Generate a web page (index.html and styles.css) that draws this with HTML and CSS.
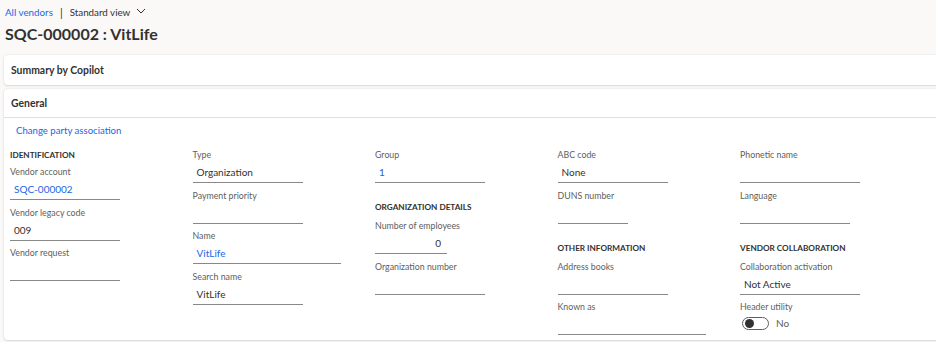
FILE: index.html
```html
<!DOCTYPE html>
<html lang="en">
<head>
  <meta charset="UTF-8" />
  <title>SQC-000002 : VitLife</title>
  <link rel="stylesheet" href="styles.css">
</head>
<body>
  <div class="crumbs">
    <a class="link">All vendors</a>
    <span class="sep">|</span>
    <span class="view">Standard view
      <svg width="10" height="6" viewBox="0 0 10 6"><path d="M1 1l4 4 4-4" fill="none" stroke="#323130" stroke-width="1"/></svg>
    </span>
  </div>
  <h1>SQC-000002 : VitLife</h1>

  <div class="card">
    <div class="card-head">Summary by Copilot</div>
  </div>

  <div class="card general">
    <div class="card-head divided">General</div>
    <a class="link party">Change party association</a>

    <div class="columns">
      <div class="col">
        <div class="group-title">IDENTIFICATION</div>
        <div class="field">
          <label>Vendor account</label>
          <div class="value link-value">SQC-000002</div>
        </div>
        <div class="field">
          <label>Vendor legacy code</label>
          <div class="value">009</div>
        </div>
        <div class="field">
          <label>Vendor request</label>
          <div class="value"></div>
        </div>
      </div>

      <div class="col">
        <div class="field">
          <label>Type</label>
          <div class="value">Organization</div>
        </div>
        <div class="field">
          <label>Payment priority</label>
          <div class="value"></div>
        </div>
        <div class="field">
          <label>Name</label>
          <div class="value wide link-value">VitLife</div>
        </div>
        <div class="field">
          <label>Search name</label>
          <div class="value">VitLife</div>
        </div>
      </div>

      <div class="col">
        <div class="field">
          <label>Group</label>
          <div class="value link-value">1</div>
        </div>
        <div class="group-title spaced">ORGANIZATION DETAILS</div>
        <div class="field">
          <label>Number of employees</label>
          <div class="value short num">0</div>
        </div>
        <div class="field">
          <label>Organization number</label>
          <div class="value"></div>
        </div>
      </div>

      <div class="col">
        <div class="field">
          <label>ABC code</label>
          <div class="value">None</div>
        </div>
        <div class="field">
          <label>DUNS number</label>
          <div class="value tiny"></div>
        </div>
        <div class="group-title spaced">OTHER INFORMATION</div>
        <div class="field">
          <label>Address books</label>
          <div class="value"></div>
        </div>
        <div class="field">
          <label>Known as</label>
          <div class="value known"></div>
        </div>
      </div>

      <div class="col">
        <div class="field">
          <label>Phonetic name</label>
          <div class="value phonetic"></div>
        </div>
        <div class="field">
          <label>Language</label>
          <div class="value"></div>
        </div>
        <div class="group-title spaced">VENDOR COLLABORATION</div>
        <div class="field">
          <label>Collaboration activation</label>
          <div class="value phonetic">Not Active</div>
        </div>
        <div class="field">
          <label>Header utility</label>
          <div class="toggle-row">
            <span class="toggle"><span class="knob"></span></span>
            <span class="toggle-text">No</span>
          </div>
        </div>
      </div>
    </div>
  </div>
</body>
</html>
```

FILE: styles.css
```css
body {
  margin: 0;
  padding: 0 0 0 4px;
  background: #faf9f8;
  color: #323130;
  font-family: Lato, "Open Sans", sans-serif;
  overflow: hidden;
  height: 342px;
}
.link {
  color: #2266e3;
  cursor: pointer;
}
.crumbs {
  font-size: 9.8px;
  display: flex;
  align-items: center;
  height: 16px;
  padding: 4px 0 0 1px;
}
.sep {
  margin: 0 7px 0 7px;
  font-size: 11px;
  color: #323130;
}
.view svg {
  margin-left: 3px;
  vertical-align: 2px;
}
h1 {
  font-size: 16px;
  font-weight: 700;
  margin: 1px 0 0 1px;
  height: 34px;
  line-height: 25px;
}
.card {
  background: #fff;
  border-radius: 4px 0 0 4px;
  box-shadow: 0 0 2px rgba(0,0,0,0.12), 0 1px 2px rgba(0,0,0,0.10);
  margin-bottom: 4px;
  margin-right: -10px;
}
.card-head {
  font-size: 10.4px;
  font-weight: 700;
  height: 30px;
  line-height: 30px;
  padding-left: 7px;
}
.card-head.divided {
  border-bottom: 1px solid #e1dfdd;
  height: 28px;
  line-height: 28px;
}
.general {
  height: 251px;
}
.party {
  display: block;
  font-size: 9.6px;
  margin: 5px 0 0 12px;
  height: 24px;
  line-height: 16px;
}
.columns {
  display: flex;
  padding-left: 6px;
}
.col {
  width: 182.5px;
  flex: none;
}
.group-title {
  font-size: 8.2px;
  font-weight: 700;
  height: 16px;
  line-height: 16px;
  margin-bottom: 1px;
  color: #323130;
}
.group-title.spaced {
  margin-top: 16px;
  margin-bottom: 3px;
}
.field {
  margin-bottom: 4.5px;
}
.field label {
  display: block;
  font-size: 8.8px;
  color: #605e5c;
  height: 16px;
  line-height: 16px;
}
.value {
  width: 106px;
  height: 19px;
  line-height: 19px;
  font-size: 10px;
  padding-left: 4px;
  border-bottom: 1px solid #8a8886;
}
.link-value {
  color: #2266e3;
}
.value.wide {
  width: 144px;
}
.value.short {
  width: 62px;
  padding-right: 6px;
}
.value.num {
  text-align: right;
}
.value.tiny {
  width: 66px;
}
.value.known {
  width: 144px;
}
.value.phonetic {
  width: 116px;
}
.toggle-row {
  display: flex;
  align-items: center;
  height: 16px;
  padding-left: 2px;
}
.toggle {
  width: 21px;
  height: 11px;
  border: 1px solid #605e5c;
  border-radius: 8px;
  display: flex;
  align-items: center;
  padding: 0 2px;
}
.knob {
  width: 9px;
  height: 9px;
  border-radius: 50%;
  background: #323130;
}
.toggle-text {
  font-size: 10px;
  margin-left: 7px;
  color: #605e5c;
}
```
